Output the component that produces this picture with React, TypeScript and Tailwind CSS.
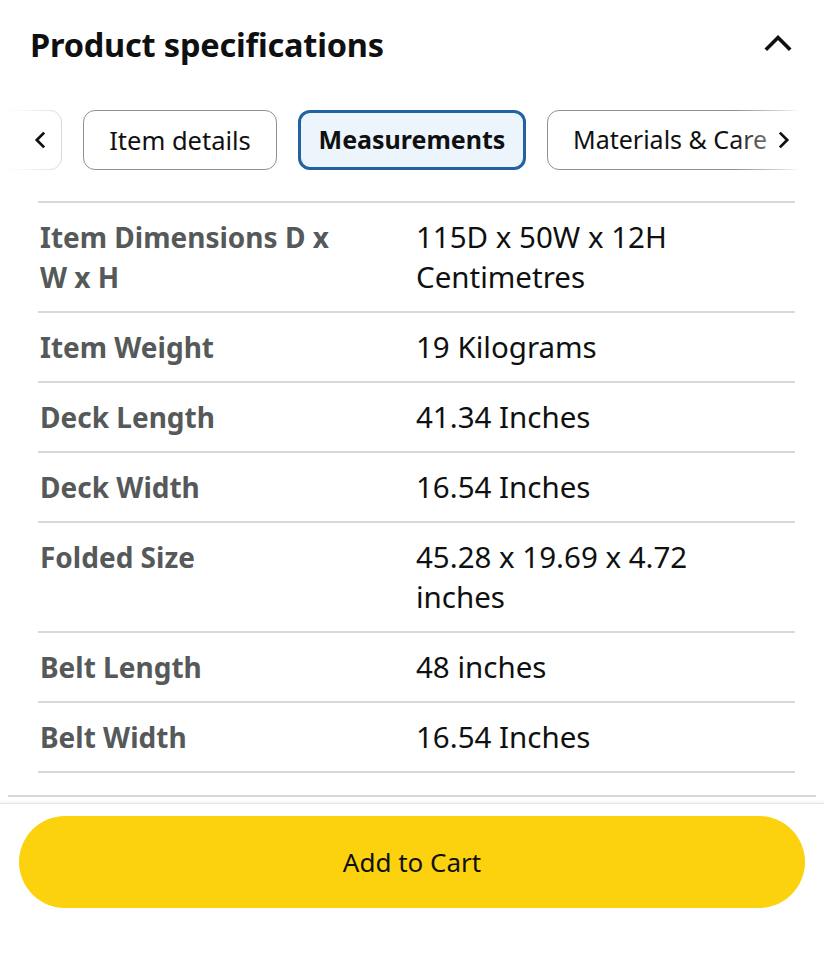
import React from "react";

const rows: { label: string; value: string }[] = [
  { label: "Item Dimensions D x W x H", value: "115D x 50W x 12H Centimetres" },
  { label: "Item Weight", value: "19 Kilograms" },
  { label: "Deck Length", value: "41.34 Inches" },
  { label: "Deck Width", value: "16.54 Inches" },
  { label: "Folded Size", value: "45.28 x 19.69 x 4.72 inches" },
  { label: "Belt Length", value: "48 inches" },
  { label: "Belt Width", value: "16.54 Inches" },
];

function Chevron({ dir, className }: { dir: "up" | "left" | "right"; className?: string }) {
  const d =
    dir === "up" ? "M4 16 L14 6 L24 16" : dir === "left" ? "M14 4 L6 12 L14 20" : "M6 4 L14 12 L6 20";
  const vb = dir === "up" ? "0 0 28 22" : "0 0 20 24";
  return (
    <svg viewBox={vb} className={className} fill="none" stroke="currentColor" strokeWidth={3.4} strokeLinecap="square">
      <path d={d} />
    </svg>
  );
}

export default function App() {
  return (
    <div className="w-[824px] h-[960px] bg-white flex flex-col font-['Noto_Sans',sans-serif] text-[#0f1111]">
      {/* header */}
      <div className="flex items-center justify-between pl-[30px] pr-[30px] h-[90px]">
        <h2 className="text-[32.5px] font-bold tracking-[-0.2px] text-[#0f1111]">Product specifications</h2>
        <Chevron dir="up" className="w-[32px] h-[24px] mb-[4px] text-[#0f1111]" />
      </div>

      {/* tabs */}
      <div className="relative mt-[20px] h-[60px] overflow-hidden">
        <div className="flex gap-[21px] ml-[-38px]">
          <div className="w-[100px] h-[60px] flex-none rounded-xl border border-[#d5d9d9]" />
          <div className="w-[194px] h-[60px] flex-none flex items-center justify-center rounded-xl border border-[#8d9096] text-[25.5px]">
            Item details
          </div>
          <div className="w-[228px] h-[60px] flex-none flex items-center justify-center rounded-xl border-[3px] border-[#2162a1] bg-[#edf5fc] text-[25px] font-bold">
            Measurements
          </div>
          <div className="h-[60px] flex-none pl-[25px] pr-[40px] flex items-center rounded-xl border border-[#8d9096] text-[25px]">
            Materials &amp; Care
          </div>
        </div>
        <div className="absolute left-0 top-0 h-full w-[64px] bg-gradient-to-r from-white via-white/70 to-transparent flex items-center pl-[32px]">
          <Chevron dir="left" className="w-[16px] h-[22px] text-[#0f1111]" />
        </div>
        <div className="absolute right-0 top-0 h-full w-[90px] bg-gradient-to-l from-white from-25% via-white/60 to-transparent flex items-center justify-end pr-[32px]">
          <Chevron dir="right" className="w-[16px] h-[22px] text-[#0f1111]" />
        </div>
      </div>

      {/* table */}
      <div className="mt-[31px] ml-[38px] w-[757px] border-t-2 border-[#d5d9d9]">
        {rows.map((r) => (
          <div key={r.label} className="flex py-[14px] border-b-2 border-[#d5d9d9] leading-[40px]">
            <div className="w-[378px] pl-[2px] pr-[70px] text-[28px] font-bold text-[#565959]">{r.label}</div>
            <div className="w-[340px] text-[29.5px]">{r.value}</div>
          </div>
        ))}
      </div>

      {/* bottom bar */}
      <div className="mt-[22px] mx-[8px] h-[2px] bg-[#d5d9d9]" />
      <div className="mt-[6px] border-t border-[#e3e6e6] shadow-[0_-1px_3px_rgba(0,0,0,0.06)] px-[19px] pt-[12px]">
        <button className="w-full h-[92px] rounded-full bg-[#fcd20f] text-[26px] text-[#0f1111]">Add to Cart</button>
      </div>
    </div>
  );
}
